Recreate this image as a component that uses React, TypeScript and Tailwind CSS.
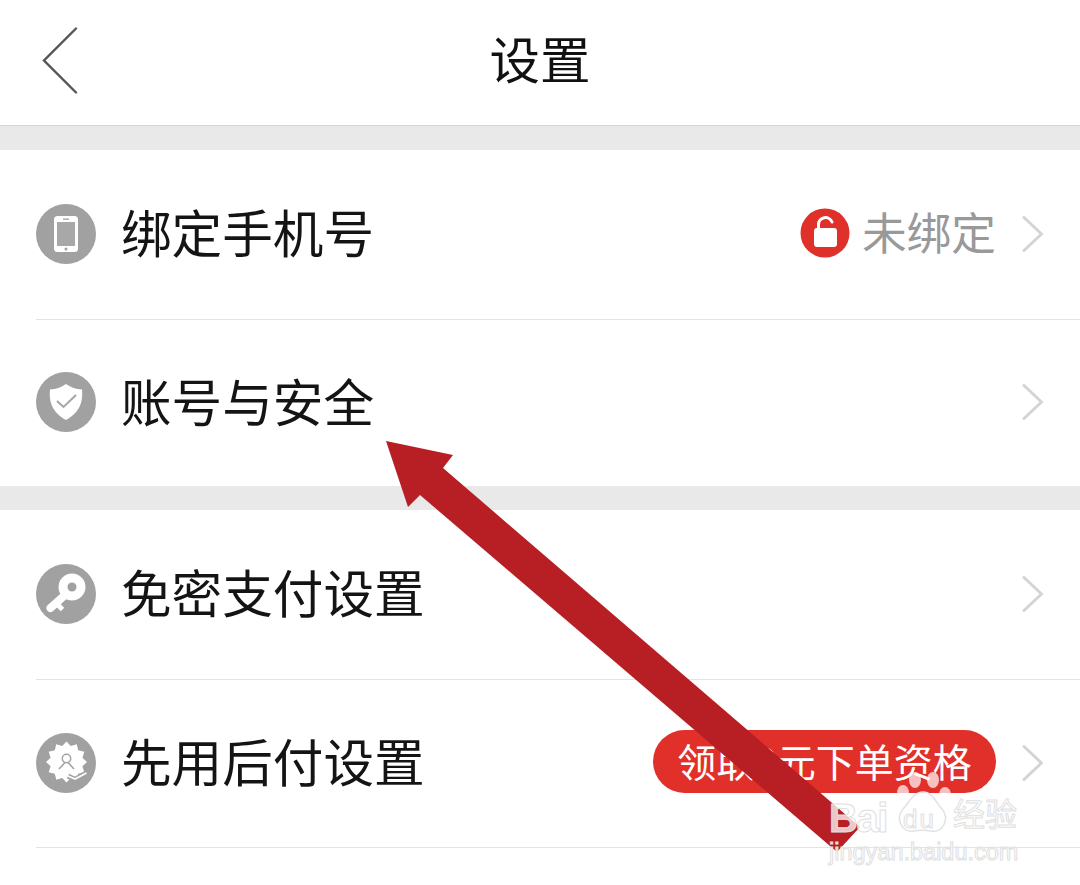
const CJK = "font-['Noto_Sans_CJK_SC','Noto_Sans',sans-serif]";

function Chevron() {
  return (
    <svg width="22" height="36" viewBox="0 0 22 36" className="shrink-0" fill="none">
      <path d="M2 1.5 L19.5 18 L2 34.5" stroke="#d4d4d4" strokeWidth="3" strokeLinecap="round" strokeLinejoin="round" />
    </svg>
  );
}

function Circle({ children }: { children: React.ReactNode }) {
  return (
    <svg width="60" height="60" viewBox="0 0 60 60" className="shrink-0">
      <circle cx="30" cy="30" r="30" fill="#a1a1a1" />
      {children}
    </svg>
  );
}

const PhoneIcon = (
  <Circle>
    <rect x="18" y="12" width="24" height="36" rx="3.5" fill="#fff" />
    <rect x="21" y="18" width="18" height="24" fill="#a8a8a8" />
    <rect x="27" y="14.5" width="6" height="1.3" fill="#a1a1a1" />
    <circle cx="30" cy="45" r="1.5" fill="#a1a1a1" />
  </Circle>
);

const ShieldIcon = (
  <Circle>
    <path d="M30 12 C35 15.5 40 17 46 17.5 C47 28 45 40 30 48 C15 40 13 28 14 17.5 C20 17 25 15.5 30 12 Z" fill="#fff" />
    <path d="M21 29 L27.5 35 L40 23" fill="none" stroke="#a6a6a6" strokeWidth="2" />
  </Circle>
);

const KeyIcon = (
  <Circle>
    <path d="M29 31 L14.5 44" stroke="#fff" strokeWidth="8" strokeLinecap="round" fill="none" />
    <path d="M20 39 L26.5 45.5" stroke="#fff" strokeWidth="5" fill="none" />
    <circle cx="36" cy="23" r="13.5" fill="#fff" />
    <circle cx="36" cy="23" r="4.5" fill="#a1a1a1" />
  </Circle>
);

const starPoints = Array.from({ length: 24 }, (_, i) => {
  const r = i % 2 === 0 ? 20.5 : 16.5;
  const a = (i * Math.PI) / 12 - Math.PI / 2;
  return `${(30.5 + r * Math.cos(a)).toFixed(1)},${(29 + r * Math.sin(a)).toFixed(1)}`;
}).join(" ");

const BadgeIcon = (
  <Circle>
    <polygon points={starPoints} fill="#fff" />
    <circle cx="30.5" cy="25.5" r="4.2" fill="none" stroke="#a1a1a1" strokeWidth="1.5" />
    <path d="M29 29.5 L23 36 M32 29.5 L38 36" stroke="#a1a1a1" strokeWidth="1.5" fill="none" />
    <path d="M32 43 L39 46.5 L50.5 40" stroke="#a1a1a1" strokeWidth="5" fill="none" />
    <path d="M32 43 L39 46 L50.5 40" stroke="#fff" strokeWidth="1.8" fill="none" />
  </Circle>
);

function Row({
  h,
  icon,
  label,
  right,
  divider = true,
}: {
  h: string;
  icon: React.ReactNode;
  label: string;
  right?: React.ReactNode;
  divider?: boolean;
}) {
  return (
    <div className={`ml-9 flex items-center pb-[2px] pr-9 ${h} ${divider ? "border-b border-[#e4e4e4]" : ""}`}>
      {icon}
      <span className="mb-[4px] ml-[25px] flex-1 text-[50.6px] leading-none text-[#141414]">{label}</span>
      {right}
      <div className="ml-[26px]">
        <Chevron />
      </div>
    </div>
  );
}

export default function App() {
  return (
    <div className={`relative h-[885px] w-[1080px] overflow-hidden bg-white ${CJK}`}>
      <header className="relative flex h-[126px] items-center justify-center border-b border-[#d6d6d6] pb-[11px]">
        <svg width="36" height="68" viewBox="0 0 36 68" className="absolute left-[42px] top-[27px]" fill="none">
          <path d="M34 1.5 L2 33.5 L34 65.5" stroke="#555" strokeWidth="2.4" strokeLinecap="round" strokeLinejoin="miter" />
        </svg>
        <h1 className="text-[50.5px] font-normal leading-none text-[#111111]">设置</h1>
      </header>
      <div className="h-6 bg-[#e9e9e9]" />
      <Row
        h="h-[170px]"
        icon={PhoneIcon}
        label="绑定手机号"
        right={
          <div className="flex items-center">
            <svg width="50" height="50" viewBox="0 0 50 50" className="mb-[2px]">
              <circle cx="25" cy="25" r="24.5" fill="#e0302a" />
              <rect x="14" y="20" width="23" height="19" rx="3" fill="#fff" />
              <path d="M18.5 21 V16.5 A7 7 0 0 1 32 14" fill="none" stroke="#fff" strokeWidth="3" strokeLinecap="round" />
            </svg>
            <span className="mb-[5px] ml-[12px] text-[44.7px] leading-none text-[#999999]">未绑定</span>
          </div>
        }
      />
      <Row h="h-[166px]" icon={ShieldIcon} label="账号与安全" divider={false} />
      <div className="h-6 bg-[#e9e9e9]" />
      <Row h="h-[170px]" icon={KeyIcon} label="免密支付设置" />
      <Row
        h="h-[168px]"
        icon={BadgeIcon}
        label="先用后付设置"
        right={
          <div className="mb-[2px] flex h-[63px] w-[343px] items-center justify-center rounded-full bg-[#e1302a] pb-[3px] text-[39px] leading-none text-white">
            领取0元下单资格
          </div>
        }
      />

      {/* annotation arrow drawn over the screenshot */}
      <svg width="1080" height="885" viewBox="0 0 1080 885" className="absolute left-0 top-0">
        <path d="M386 441 L453 455 L443 468 L860 827 L837 852 L420 495 L408 507 Z" fill="#b71f25" />
      </svg>

      {/* watermark */}
      <div className="absolute left-[829px] top-[770px] h-[110px] w-[200px] text-white">
        <svg width="70" height="70" viewBox="0 0 70 70" className="absolute left-[60px] top-0" fill="none">
          <ellipse cx="14" cy="23" rx="6" ry="8" fill="#fff" fillOpacity="0.7" />
          <ellipse cx="26" cy="10" rx="6" ry="8" fill="#fff" fillOpacity="0.7" />
          <ellipse cx="44" cy="10" rx="6" ry="8" fill="#fff" fillOpacity="0.7" />
          <ellipse cx="56" cy="25" rx="6" ry="8" fill="#fff" fillOpacity="0.7" />
          <path d="M34 22 C44 22 47 33 53 39 C61 49 54 63 42 61 C36 60 31 60 25 61 C13 63 6 49 14 39 C20 33 24 22 34 22 Z" stroke="#e2e2e2" strokeWidth="1.5" fill="#fff" fillOpacity="0.4" />
        </svg>
        <span className="absolute left-0 top-[28px] font-['Liberation_Sans',sans-serif] text-[40px] font-bold leading-none tracking-[-1.5px] text-white/75 [-webkit-text-stroke:1px_#e0e0e0]">
          Bai
        </span>
        <span className="absolute left-[74px] top-[36px] font-['Liberation_Sans',sans-serif] text-[26px] leading-none tracking-[2px] text-white/70 [-webkit-text-stroke:1px_#e0e0e0]">
          du
        </span>
        <span className="absolute left-[124px] top-[26px] text-[32px] leading-none text-white/80 [-webkit-text-stroke:1px_#e0e0e0]">
          经验
        </span>
        <span className="absolute left-0 top-[71px] font-['Liberation_Sans',sans-serif] text-[23.5px] leading-none text-white/80 [-webkit-text-stroke:1px_#e0e0e0]">
          jingyan.baidu.com
        </span>
      </div>
    </div>
  );
}
